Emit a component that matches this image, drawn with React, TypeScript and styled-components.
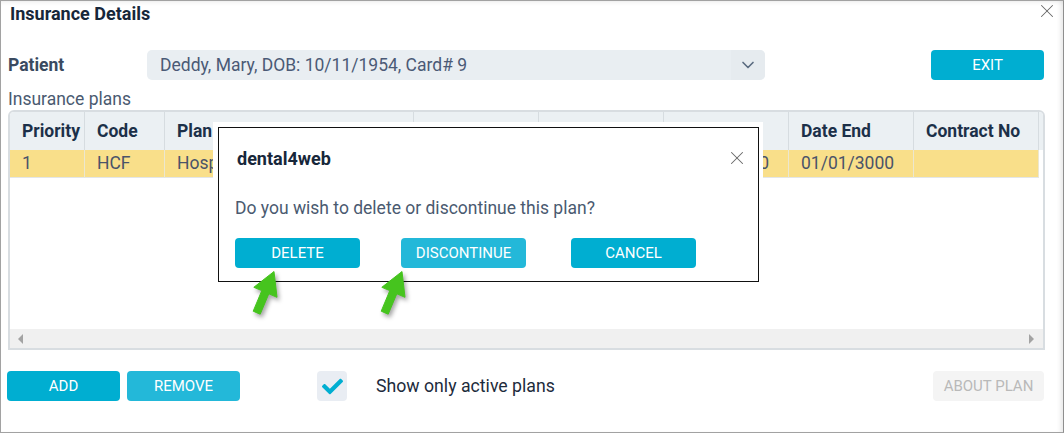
import styled, { createGlobalStyle } from "styled-components";
import { ChevronDown, X } from "lucide-react";
import { FaCheck } from "react-icons/fa";

const GlobalStyle = createGlobalStyle`
  html, body { margin: 0; padding: 0; background: #fff; }
  body { font-family: Roboto, "Liberation Sans", sans-serif; }
  * { box-sizing: border-box; }
`;

type Column = { title: string, width: number, value: string }

const columns: Column[] = [
    { title: "Priority", width: 75, value: "1" },
    { title: "Code", width: 80, value: "HCF" },
    { title: "Plan", width: 249, value: "Hospital" },
    { title: "", width: 125, value: "" },
    { title: "", width: 125, value: "" },
    { title: "", width: 125, value: "01/01/2020" },
    { title: "Date End", width: 125, value: "01/01/3000" },
    { title: "Contract No", width: 125, value: "" },
]

export default function App() {
    return (
        <>
            <GlobalStyle />
            <Window>
                <TitleBar>
                    <h1>Insurance Details</h1>
                    <CloseButton><X size={22} strokeWidth={1.1} /></CloseButton>
                </TitleBar>

                <PatientRow>
                    <FieldLabel>Patient</FieldLabel>
                    <Select>
                        <span>Deddy, Mary, DOB: 10/11/1954, Card# 9</span>
                        <div className="chevron"><ChevronDown size={20} strokeWidth={2} /></div>
                    </Select>
                    <Button $width={113} $tone="primary" className="push">EXIT</Button>
                </PatientRow>

                <SectionLabel>Insurance plans</SectionLabel>

                <Table>
                    <HeaderRow>
                        {columns.map((c, i) => (
                            <HeaderCell key={i} $width={c.width}>{c.title}</HeaderCell>
                        ))}
                    </HeaderRow>
                    <DataRow>
                        {columns.map((c, i) => (
                            <DataCell key={i} $width={c.width}>{c.value}</DataCell>
                        ))}
                    </DataRow>
                    <TableBody />
                    <ScrollBar>
                        <Triangle $dir="left" />
                        <Triangle $dir="right" />
                    </ScrollBar>
                </Table>

                <BottomBar>
                    <Button $width={113} $tone="primary">ADD</Button>
                    <Button $width={113} $tone="light">REMOVE</Button>
                    <CheckRow>
                        <CheckBox><FaCheck size={21} /></CheckBox>
                        <span>Show only active plans</span>
                    </CheckRow>
                    <Button $width={111} $tone="disabled" className="push">ABOUT PLAN</Button>
                </BottomBar>

                <DialogShell>
                    <Dialog>
                        <DialogHead>
                            <h2>dental4web</h2>
                            <CloseButton><X size={22} strokeWidth={1.1} /></CloseButton>
                        </DialogHead>
                        <DialogText>Do you wish to delete or discontinue this plan?</DialogText>
                        <DialogActions>
                            <Button $width={125} $tone="primary">DELETE</Button>
                            <Button $width={125} $tone="light" className="mid">DISCONTINUE</Button>
                            <Button $width={125} $tone="primary">CANCEL</Button>
                        </DialogActions>
                    </Dialog>
                </DialogShell>

                <Pointer $left={250} $top={268} />
                <Pointer $left={378} $top={268} />
            </Window>
        </>
    )
}

function Pointer({ $left, $top }: { $left: number, $top: number }) {
    return (
        <PointerSvg $left={$left} $top={$top} width="40" height="56" viewBox="0 0 40 56">
            <polygon
                points="24,3.5 27,29.3 18.8,25.8 10.2,46.2 3.2,43.2 11.8,22.6 3.8,19.3"
                fill="#46c41e"
                stroke="#46c41e"
                strokeWidth="1"
                strokeLinejoin="round"
            />
        </PointerSvg>
    )
}

const Window = styled.div`
position: relative;
width: 1064px;
height: 433px;
border: 1px solid #a2a2a2;
border-right-color: #8f8f8f;
padding: 0 19px 0 7px;
display: flex;
flex-direction: column;
background: #fff;
box-shadow: inset -5px 0 5px -3px rgba(0,0,0,0.10), inset 0 5px 5px -4px rgba(0,0,0,0.08);
overflow: hidden;
color: #1b2b3d;
`;

const TitleBar = styled.div`
display: flex;
justify-content: space-between;
align-items: flex-start;
height: 26px;
margin-right: -14px;
padding-left: 2px;

h1{
    margin: 0;
    font-size: 18px;
    line-height: 26px;
    font-weight: 700;
    color: #17273a;
}
`;

const CloseButton = styled.div`
display: grid;
place-content: center;
width: 22px;
height: 22px;
margin-top: -1px;
color: #676767;
`;

const PatientRow = styled.div`
display: flex;
align-items: center;
height: 30px;
margin-top: 23px;

.push{ margin-left: auto; }
`;

const FieldLabel = styled.div`
width: 139px;
font-size: 17.5px;
font-weight: 700;
color: #3a4a60;
`;

const Select = styled.div`
display: flex;
align-items: center;
justify-content: space-between;
width: 618px;
height: 30px;
border-radius: 5px;
background: #e9eef2;
padding-left: 13px;
font-size: 17.5px;
color: #4b5a76;

.chevron{
    display: grid;
    place-content: center;
    width: 34px;
    height: 100%;
    border-radius: 0 5px 5px 0;
    background: #e6ebef;
    color: #5b6b80;
}
`;

const tones = {
    primary: { bg: "#00aed1", fg: "#ffffff" },
    light: { bg: "#23b8d9", fg: "#ffffff" },
    disabled: { bg: "#f4f4f4", fg: "#b9b9b9" },
}

const Button = styled.button<{ $width: number, $tone: keyof typeof tones }>`
display: grid;
place-content: center;
width: ${({ $width }) => $width}px;
height: 30px;
border: none;
border-radius: 4px;
padding: 0;
background: ${({ $tone }) => tones[$tone].bg};
color: ${({ $tone }) => tones[$tone].fg};
font-family: Roboto, "Liberation Sans", sans-serif;
font-size: 15px;
font-weight: 400;
cursor: pointer;
`;

const SectionLabel = styled.div`
margin-top: 9px;
height: 20px;
line-height: 20px;
font-size: 17.5px;
color: #4a5a70;
`;

const Table = styled.div`
display: flex;
flex-direction: column;
margin-top: 1px;
width: 1037px;
height: 240px;
border: 2px solid #d8dde1;
border-radius: 6px 6px 0 0;
overflow: hidden;
`;

const HeaderRow = styled.div`
display: flex;
height: 38px;
background: #ebf0f3;
flex-shrink: 0;
`;

const HeaderCell = styled.div<{ $width: number }>`
width: ${({ $width }) => $width}px;
flex-shrink: 0;
border-right: 1px solid #d6dce0;
padding-left: 12px;
line-height: 38px;
font-size: 17.5px;
font-weight: 700;
color: #1c3049;
white-space: nowrap;
overflow: hidden;
`;

const DataRow = styled.div`
display: flex;
height: 28px;
flex-shrink: 0;
`;

const DataCell = styled.div<{ $width: number }>`
width: ${({ $width }) => $width}px;
flex-shrink: 0;
background: #f9df8a;
border-right: 1px solid #ece7cf;
border-bottom: 1px solid #e3e6e8;
padding-left: 12px;
line-height: 27px;
font-size: 17.5px;
color: #4a5369;
white-space: nowrap;
overflow: hidden;
`;

const TableBody = styled.div`
flex: 1;
background: #fff;
`;

const ScrollBar = styled.div`
display: flex;
align-items: center;
justify-content: space-between;
height: 19px;
flex-shrink: 0;
padding: 0 9px 0 8px;
background: #f0f0f0;
`;

const Triangle = styled.div<{ $dir: "left" | "right" }>`
width: 0;
height: 0;
border-top: 5px solid transparent;
border-bottom: 5px solid transparent;
${({ $dir }) => $dir === "left" ? "border-right: 5px solid #a3a3a3;" : "border-left: 5px solid #a3a3a3;"}
`;

const BottomBar = styled.div`
display: flex;
align-items: center;
gap: 7px;
margin-top: 21px;
margin-left: -1px;
height: 30px;

.push{ margin-left: auto; }
`;

const CheckRow = styled.div`
display: flex;
align-items: center;
gap: 29px;
margin-left: 70px;
font-size: 17.7px;
color: #1d2b3c;
`;

const CheckBox = styled.div`
display: grid;
place-content: center;
width: 30px;
height: 30px;
border-radius: 4px;
background: #e9edf3;
color: #00aed1;
`;

const DialogShell = styled.div`
position: absolute;
left: 212px;
top: 121px;
padding: 5px 4px 4px 5px;
background: #fff;
`;

const Dialog = styled.div`
width: 541px;
height: 155px;
border: 1px solid #111;
background: #fff;
padding: 18px 10px 0 16px;
`;

const DialogHead = styled.div`
display: flex;
justify-content: space-between;
align-items: center;
height: 24px;
padding-left: 2px;

h2{
    margin: 0;
    font-size: 18px;
    font-weight: 700;
    color: #17273a;
}
`;

const DialogText = styled.div`
margin-top: 27px;
line-height: 22px;
font-size: 17.5px;
color: #4a5a70;
`;

const DialogActions = styled.div`
display: flex;
gap: 45px;
margin-top: 19px;

.mid{ margin-left: -4px; }
`;

const PointerSvg = styled.svg<{ $left: number, $top: number }>`
position: absolute;
left: ${({ $left }) => $left - 1}px;
top: ${({ $top }) => $top - 1}px;
overflow: visible;
filter: drop-shadow(2px 3px 2px rgba(0,0,0,0.35));
`;
